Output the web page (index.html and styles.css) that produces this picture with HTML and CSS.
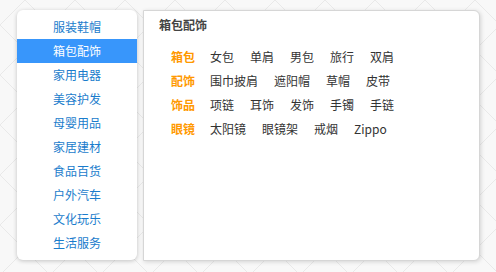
FILE: index.html
```html
<!DOCTYPE html>
<html lang="zh-CN">
  <head>
    <meta charset="UTF-8" />
    <meta name="viewport" content="width=device-width, initial-scale=1.0" />
    <title>商品分类</title>
    <link rel="stylesheet" href="styles.css">
  </head>
  <body>
    <div class="wrap">
      <ul class="menu">
        <li>服装鞋帽</li>
        <li class="active">箱包配饰</li>
        <li>家用电器</li>
        <li>美容护发</li>
        <li>母婴用品</li>
        <li>家居建材</li>
        <li>食品百货</li>
        <li>户外汽车</li>
        <li>文化玩乐</li>
        <li>生活服务</li>
      </ul>

      <div class="panel">
        <h3 class="panel-title">箱包配饰</h3>
        <dl class="row">
          <dt>箱包</dt>
          <dd>女包</dd>
          <dd>单肩</dd>
          <dd>男包</dd>
          <dd>旅行</dd>
          <dd>双肩</dd>
        </dl>
        <dl class="row">
          <dt>配饰</dt>
          <dd>围巾披肩</dd>
          <dd>遮阳帽</dd>
          <dd>草帽</dd>
          <dd>皮带</dd>
        </dl>
        <dl class="row">
          <dt>饰品</dt>
          <dd>项链</dd>
          <dd>耳饰</dd>
          <dd>发饰</dd>
          <dd>手镯</dd>
          <dd>手链</dd>
        </dl>
        <dl class="row">
          <dt>眼镜</dt>
          <dd>太阳镜</dd>
          <dd>眼镜架</dd>
          <dd>戒烟</dd>
          <dd>Zippo</dd>
        </dl>
      </div>
    </div>
  </body>
</html>
```

FILE: styles.css
```css
body {
  margin: 0;
  height: 272px;
  font-family: "Noto Sans CJK SC", "Noto Sans", sans-serif;
  font-size: 12px;
  background-color: #f8f8f8;
  background-image:
    linear-gradient(45deg, transparent 49.2%, #e9e9e9 49.2%, #e9e9e9 50.8%, transparent 50.8%),
    linear-gradient(-45deg, transparent 49.2%, #e9e9e9 49.2%, #e9e9e9 50.8%, transparent 50.8%);
  background-size: 50px 50px;
  background-position: 25px 0;
}

.wrap {
  display: flex;
  align-items: flex-start;
  gap: 6px;
  padding: 10px 0 0 17px;
}

.menu {
  list-style: none;
  margin: 0;
  padding: 5px 0 5px;
  width: 120px;
  height: 240px;
  background-color: #ffffff;
  border-radius: 6px;
  box-shadow: 0 1px 4px rgba(0, 0, 0, 0.22);
}

.menu li {
  height: 24px;
  line-height: 24px;
  text-align: center;
  color: #1a7ccc;
}

.menu li.active {
  background-color: #3896fb;
  color: #ffffff;
}

.panel {
  width: 305px;
  height: 244px;
  padding: 5px 15px 0;
  background-color: #ffffff;
  border: 1px solid #d6d6d6;
  border-radius: 0 6px 6px 0;
  box-shadow: 1px 1px 4px rgba(0, 0, 0, 0.15);
}

.panel-title {
  margin: 0 0 11px;
  font-size: 12px;
  line-height: 18px;
  font-weight: bold;
  color: #444444;
}

.row {
  display: flex;
  margin: 0 0 0 12px;
  line-height: 24px;
}

.row dt {
  width: 39px;
  color: #ff9900;
  font-weight: bold;
}

.row dd {
  margin: 0 16px 0 0;
  color: #333333;
}
```
